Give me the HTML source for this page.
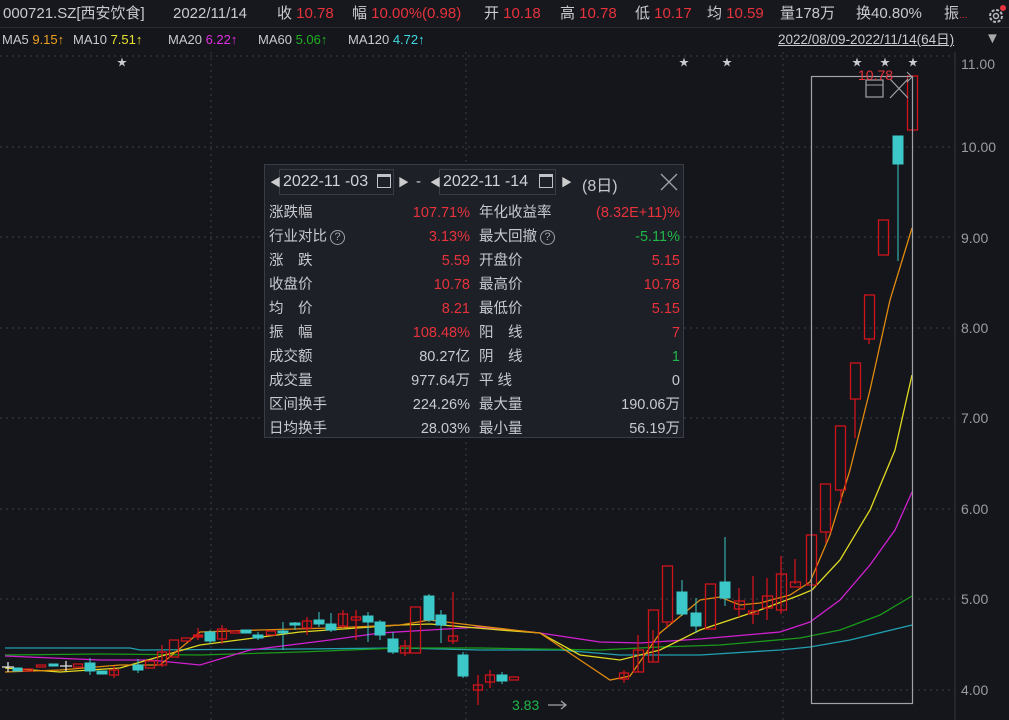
<!DOCTYPE html>
<html><head><meta charset="utf-8"><style>
*{margin:0;padding:0;box-sizing:border-box}
body{width:1009px;height:720px;background:#14161b;font-family:"Liberation Sans","Noto Sans CJK SC",sans-serif;color:#c8cad0;overflow:hidden;position:relative}
.t{position:absolute;white-space:nowrap}
.r{color:#e8323c}.g{color:#1fb64a}
#top{position:absolute;left:0;top:0;width:1009px;height:28px;background:#16181d;border-bottom:1px solid #2a2c33;font-size:15px;line-height:28px}
#ma{position:absolute;left:0;top:29px;width:1009px;height:22px;font-size:13px;line-height:22px}
#pop{position:absolute;left:264px;top:164px;width:420px;height:274px;background:#1e2027;border:1px solid #3a3c45}
#pop .row{position:absolute;left:0;width:420px;height:24px;font-size:14.5px;line-height:24px}
.l1{position:absolute;left:4px}.v1{position:absolute;right:215px;text-align:right}
.l2{position:absolute;left:214px}.v2{position:absolute;right:5px;text-align:right}
.db{position:absolute;top:4px;height:26px;border:1px solid #3a3c45;font-size:16px;line-height:24px;padding-left:3px;color:#d0d2d8}
.q{display:inline-block;width:15px;height:15px;border:1px solid #a0a2a8;border-radius:50%;font-size:11px;line-height:13px;text-align:center;vertical-align:1px;color:#a0a2a8;margin-left:3px}
</style></head><body>
<div id="top">
<span class="t" style="left:3px">000721.SZ[西安饮食]</span>
<span class="t" style="left:173px">2022/11/14</span>
<span class="t" style="left:277px">收 <span class="r">10.78</span></span>
<span class="t" style="left:352px">幅 <span class="r">10.00%(0.98)</span></span>
<span class="t" style="left:484px">开 <span class="r">10.18</span></span>
<span class="t" style="left:560px">高 <span class="r">10.78</span></span>
<span class="t" style="left:635px">低 <span class="r">10.17</span></span>
<span class="t" style="left:707px">均 <span class="r">10.59</span></span>
<span class="t" style="left:780px">量178万</span>
<span class="t" style="left:856px">换40.80%</span>
<span class="t" style="left:944px">振<span class="r" style="font-size:10px">...</span></span>
<svg class="t" style="left:986px;top:5px" width="20" height="20" viewBox="0 0 20 20"><circle cx="10" cy="11" r="6" fill="none" stroke="#b8bac0" stroke-width="2" stroke-dasharray="3 1.7"/><circle cx="10" cy="11" r="2.5" fill="none" stroke="#b8bac0" stroke-width="1.5"/><circle cx="17" cy="3" r="3" fill="#e8323c"/></svg>
</div>
<div id="ma">
<span class="t" style="left:2px">MA5 <span style="color:#f0a020">9.15↑</span></span>
<span class="t" style="left:73px">MA10 <span style="color:#e8e030">7.51↑</span></span>
<span class="t" style="left:168px">MA20 <span style="color:#e030e0">6.22↑</span></span>
<span class="t" style="left:258px">MA60 <span style="color:#20b020">5.06↑</span></span>
<span class="t" style="left:348px">MA120 <span style="color:#40d8e0">4.72↑</span></span>
<span class="t" style="left:778px;text-decoration:underline;font-size:13.5px">2022/08/09-2022/11/14(64日)</span>
<span class="t" style="left:985px;top:-1px;color:#aaa;font-size:15px">▼</span>
</div>
<svg style="position:absolute;left:0;top:52px" width="1009" height="668" viewBox="0 52 1009 668">
<g stroke="#3a3d45" stroke-dasharray="2 4" stroke-width="1">
<line x1="0" y1="56" x2="955" y2="56"/><line x1="0" y1="147" x2="955" y2="147"/><line x1="0" y1="237" x2="955" y2="237"/><line x1="0" y1="328" x2="955" y2="328"/><line x1="0" y1="418" x2="955" y2="418"/><line x1="0" y1="509" x2="955" y2="509"/><line x1="0" y1="599" x2="955" y2="599"/><line x1="0" y1="690" x2="955" y2="690"/>
<line x1="211" y1="52" x2="211" y2="720"/><line x1="466" y1="52" x2="466" y2="720"/><line x1="783" y1="52" x2="783" y2="720"/>
</g>
<line x1="955" y1="52" x2="955" y2="720" stroke="#33363e"/>
<g fill="#9a9ca4" font-size="14"><text x="961" y="69">11.00</text><text x="961" y="152">10.00</text><text x="961" y="243">9.00</text><text x="961" y="333">8.00</text><text x="961" y="423">7.00</text><text x="961" y="514">6.00</text><text x="961" y="604">5.00</text><text x="961" y="695">4.00</text></g>
<g fill="#c8cad0" font-size="10"><text x="117" y="66">★</text><text x="679" y="66">★</text><text x="722" y="66">★</text><text x="852" y="66">★</text><text x="880" y="66">★</text><text x="908" y="66">★</text></g>
<polyline fill="none" stroke="#20a0b0" stroke-width="1.3" points="5,648 130,648 140,650 300,649 400,648 480,650 560,650 620,655 700,655 780,650 810,647 850,640 912,625"/>
<polyline fill="none" stroke="#1a9a1a" stroke-width="1.3" points="5,655 100,654 200,655 300,652 400,648 480,648 600,650 660,647 720,645 800,638 840,630 880,615 912,596"/>
<polyline fill="none" stroke="#d020d0" stroke-width="1.3" points="5,656 100,660 150,660 200,665 250,650 330,640 380,633 430,630 480,627 540,633 600,642 640,643 700,639 780,632 810,622 840,600 870,565 895,530 912,492"/>
<polyline fill="none" stroke="#e0d820" stroke-width="1.3" points="5,668 60,672 120,668 200,645 300,632 400,625 430,624 500,630 540,633 580,655 620,660 660,650 700,630 760,610 800,595 812,590 840,560 870,510 895,450 912,375"/>
<polyline fill="none" stroke="#e08a10" stroke-width="1.3" points="5,672 60,670 120,665 160,665 200,632 260,630 330,628 400,625 430,620 470,625 540,633 580,660 610,680 630,676 660,633 700,600 720,597 740,605 760,603 790,595 810,582 830,535 850,470 870,390 890,300 912,228"/>
<g fill="#3cc8c8" stroke="#3cc8c8" stroke-width="1">
<rect x="13" y="668" width="9" height="3"/><rect x="49" y="664" width="9" height="2"/>
<line x1="90" y1="658" x2="90" y2="675"/><rect x="85" y="663" width="10" height="8"/>
<rect x="97" y="671" width="10" height="3"/>
<line x1="138" y1="659" x2="138" y2="673"/><rect x="133" y="665" width="10" height="5"/>
<line x1="210" y1="630" x2="210" y2="644"/><rect x="205" y="632" width="10" height="9"/>
<rect x="241" y="630" width="10" height="3"/><line x1="258" y1="632" x2="258" y2="640"/><rect x="253" y="635" width="10" height="3"/>
<line x1="283" y1="622" x2="283" y2="650"/><rect x="278" y="631" width="10" height="2"/>
<line x1="295" y1="622" x2="295" y2="630"/><rect x="290" y="623" width="10" height="2"/>
<line x1="319" y1="612" x2="319" y2="627"/><rect x="314" y="620" width="10" height="4"/>
<line x1="331" y1="613" x2="331" y2="632"/><rect x="326" y="624" width="10" height="6"/>
<line x1="368" y1="612" x2="368" y2="642"/><rect x="363" y="616" width="10" height="6"/>
<line x1="380" y1="620" x2="380" y2="640"/><rect x="375" y="622" width="10" height="13"/>
<line x1="393" y1="632" x2="393" y2="654"/><rect x="388" y="639" width="10" height="13"/>
<line x1="429" y1="594" x2="429" y2="622"/><rect x="424" y="596" width="10" height="24"/>
<line x1="441" y1="610" x2="441" y2="643"/><rect x="436" y="615" width="10" height="10"/>
<line x1="463" y1="652" x2="463" y2="678"/><rect x="458" y="655" width="10" height="21"/>
<line x1="502" y1="672" x2="502" y2="684"/><rect x="497" y="675" width="10" height="6"/>
<line x1="682" y1="580" x2="682" y2="616"/><rect x="677" y="592" width="10" height="22"/>
<line x1="696" y1="598" x2="696" y2="633"/><rect x="691" y="613" width="10" height="13"/>
<line x1="725" y1="537" x2="725" y2="606"/><rect x="720" y="582" width="10" height="16"/>
<line x1="898" y1="136" x2="898" y2="261"/><rect x="893" y="136" width="10" height="28"/>
</g>
<g fill="none" stroke="#d0141c" stroke-width="1.3">
<rect x="23.5" y="669" width="9" height="2"/><rect x="36.5" y="665" width="9" height="2"/><rect x="73.5" y="664" width="9" height="3"/>
<line x1="114" y1="666" x2="114" y2="678"/><rect x="109.5" y="670" width="9" height="5"/>
<rect x="145.5" y="661" width="9" height="7"/>
<line x1="162" y1="645" x2="162" y2="667"/><rect x="157.5" y="652" width="9" height="13"/>
<rect x="169.5" y="640" width="9" height="17"/><rect x="181.5" y="638" width="9" height="3"/>
<line x1="198" y1="628" x2="198" y2="640"/><rect x="193.5" y="635" width="9" height="2" fill="#d0141c"/>
<line x1="222" y1="625" x2="222" y2="644"/><rect x="217.5" y="629" width="9" height="10"/>
<rect x="230.5" y="631" width="9" height="2"/><rect x="266.5" y="631" width="9" height="4"/>
<line x1="307" y1="617" x2="307" y2="635"/><rect x="302.5" y="621" width="9" height="7"/>
<line x1="343" y1="610" x2="343" y2="628"/><rect x="338.5" y="614" width="9" height="12"/>
<line x1="356" y1="610" x2="356" y2="640"/><rect x="351.5" y="617" width="9" height="3"/>
<line x1="405" y1="640" x2="405" y2="656"/><rect x="400.5" y="646" width="9" height="7"/>
<rect x="410.5" y="607" width="10" height="46"/>
<line x1="453" y1="592" x2="453" y2="644"/><rect x="448.5" y="636" width="9" height="5"/>
<line x1="478" y1="675" x2="478" y2="705"/><rect x="473.5" y="685" width="9" height="5"/>
<line x1="490" y1="670" x2="490" y2="688"/><rect x="485.5" y="675" width="9" height="7"/>
<rect x="509.5" y="677" width="9" height="3"/>
<line x1="624" y1="670" x2="624" y2="683"/><rect x="619.5" y="673" width="9" height="6"/>
<line x1="638" y1="635" x2="638" y2="672"/><rect x="633.5" y="650" width="10" height="22"/>
<line x1="653" y1="630" x2="653" y2="662"/><rect x="648.5" y="610" width="10" height="52"/>
<line x1="667" y1="622" x2="667" y2="627"/><rect x="662.5" y="566" width="10" height="56"/>
<rect x="705.5" y="584" width="10" height="45"/>
<line x1="739" y1="588" x2="739" y2="617"/><rect x="734.5" y="601" width="10" height="8"/>
<line x1="753" y1="576" x2="753" y2="624"/><rect x="748.5" y="611" width="10" height="3"/>
<line x1="767" y1="578" x2="767" y2="620"/><rect x="762.5" y="596" width="10" height="12"/>
<line x1="781" y1="556" x2="781" y2="614"/><rect x="776.5" y="574" width="10" height="36"/>
<line x1="795" y1="559" x2="795" y2="584"/><rect x="790.5" y="582" width="10" height="5"/>
<rect x="806.5" y="535" width="10" height="50"/>
<line x1="826" y1="532" x2="826" y2="543"/><rect x="820.5" y="484" width="10" height="48"/>
<line x1="841" y1="490" x2="841" y2="503"/><rect x="835.5" y="426" width="10" height="64"/>
<line x1="855" y1="399" x2="855" y2="438"/><rect x="850.5" y="363" width="10" height="36"/>
<line x1="869" y1="339" x2="869" y2="344"/><rect x="864.5" y="295" width="10" height="44"/>
<rect x="878.5" y="220" width="10" height="35"/>
<rect x="907.5" y="76" width="10" height="54"/>
</g>
<rect x="811.5" y="76.5" width="101" height="627" fill="none" stroke="#a0a2a8" stroke-width="1.2"/>
<rect x="866" y="80" width="17" height="17" fill="none" stroke="#a0a2a8" stroke-width="1.2"/><line x1="866" y1="85" x2="883" y2="85" stroke="#a0a2a8"/>
<path d="M890 79 L908 98 M908 79 L890 98" stroke="#a0a2a8" stroke-width="1.2"/>
<text x="858" y="80" fill="#e8323c" font-size="14">10.78</text>
<path d="M907 72 L912 77 L907 82" fill="none" stroke="#a0a2a8"/>
<text x="512" y="710" fill="#1fb64a" font-size="14">3.83</text>
<path d="M548 705 L566 705 M561 701 L566 705 L561 709" fill="none" stroke="#a0a2a8" stroke-width="1.3"/>
<path d="M2 667 L14 667 M8 662 L8 672" stroke="#e0e0e0" stroke-width="1.3"/>
<path d="M60 666 L72 666 M66 661 L66 671" stroke="#e0e0e0" stroke-width="1.3"/>
</svg>
<div id="pop">
<div class="db" style="left:14px;width:115px">2022-11 -03<span style="position:absolute;right:2px;top:4px;width:14px;height:14px;border:1px solid #c0c2c8;border-top-width:3px"></span></div>
<div class="db" style="left:174px;width:117px">2022-11 -14<span style="position:absolute;right:2px;top:4px;width:14px;height:14px;border:1px solid #c0c2c8;border-top-width:3px"></span></div>
<span class="t" style="left:5px;top:9px;font-size:11px;color:#ccc">◀</span><span class="t" style="left:133px;top:9px;font-size:11px;color:#ccc">▶</span>
<span class="t" style="left:151px;top:8px;font-size:15px">-</span>
<span class="t" style="left:165px;top:9px;font-size:11px;color:#ccc">◀</span><span class="t" style="left:296px;top:9px;font-size:11px;color:#ccc">▶</span>
<span class="t" style="left:317px;top:7px;font-size:16px">(8日)</span>
<svg class="t" style="left:395px;top:8px" width="18" height="18" viewBox="0 0 18 18"><path d="M1 1 L17 17 M17 1 L1 17" stroke="#a0a2a8" stroke-width="1.3"/></svg>
<div class="row" style="top:36px"><span class="l1">涨跌幅</span><span class="v1 r">107.71%</span><span class="l2">年化收益率</span><span class="v2 r">(8.32E+11)%</span></div>
<div class="row" style="top:60px"><span class="l1">行业对比<span class="q">?</span></span><span class="v1 r">3.13%</span><span class="l2">最大回撤<span class="q">?</span></span><span class="v2 g">-5.11%</span></div>
<div class="row" style="top:84px"><span class="l1">涨　跌</span><span class="v1 r">5.59</span><span class="l2">开盘价</span><span class="v2 r">5.15</span></div>
<div class="row" style="top:108px"><span class="l1">收盘价</span><span class="v1 r">10.78</span><span class="l2">最高价</span><span class="v2 r">10.78</span></div>
<div class="row" style="top:132px"><span class="l1">均　价</span><span class="v1 r">8.21</span><span class="l2">最低价</span><span class="v2 r">5.15</span></div>
<div class="row" style="top:156px"><span class="l1">振　幅</span><span class="v1 r">108.48%</span><span class="l2">阳　线</span><span class="v2 r">7</span></div>
<div class="row" style="top:180px"><span class="l1">成交额</span><span class="v1">80.27亿</span><span class="l2">阴　线</span><span class="v2 g">1</span></div>
<div class="row" style="top:204px"><span class="l1">成交量</span><span class="v1">977.64万</span><span class="l2">平 线</span><span class="v2">0</span></div>
<div class="row" style="top:228px"><span class="l1">区间换手</span><span class="v1">224.26%</span><span class="l2">最大量</span><span class="v2">190.06万</span></div>
<div class="row" style="top:252px"><span class="l1">日均换手</span><span class="v1">28.03%</span><span class="l2">最小量</span><span class="v2">56.19万</span></div>
</div>
</body></html>
